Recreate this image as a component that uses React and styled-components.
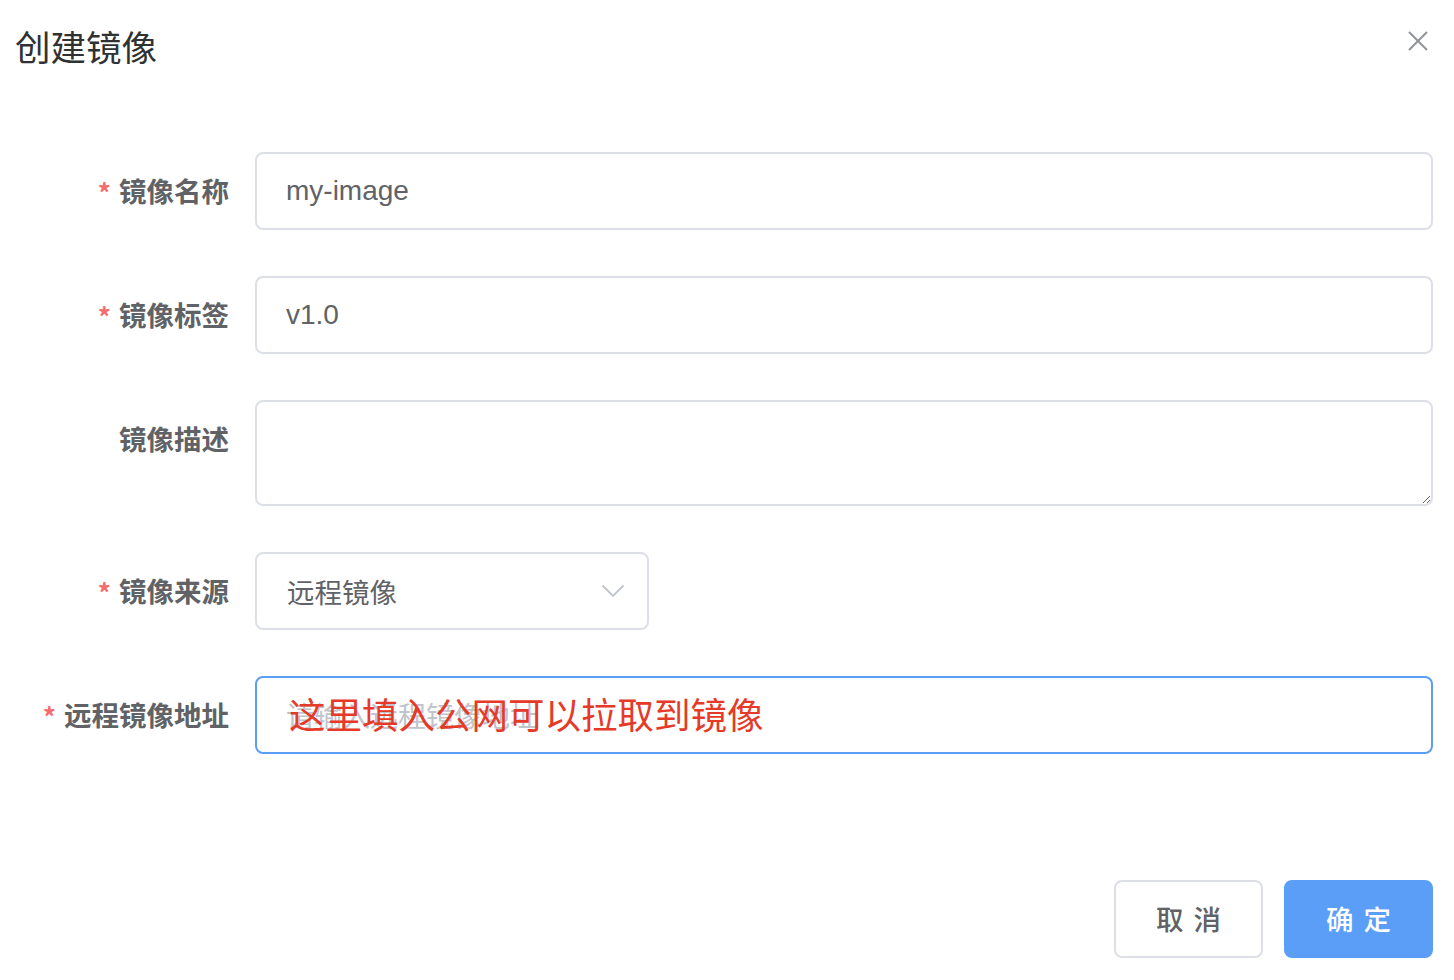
import React from 'react';
import styled, { createGlobalStyle } from 'styled-components';

const GlobalStyle = createGlobalStyle`
  html, body {
    margin: 0;
    padding: 0;
    background: #ffffff;
  }
  body {
    font-family: "Helvetica Neue", "Liberation Sans", "Noto Sans CJK SC", sans-serif;
  }
  * {
    box-sizing: border-box;
  }
`;

const cjk = `"Noto Sans CJK SC", "Liberation Sans", sans-serif`;
const latin = `"Helvetica Neue", "Liberation Sans", "Noto Sans CJK SC", sans-serif`;

const Dialog = styled.div`
  width: 1454px;
  height: 980px;
  padding: 20px 21px 0 15px;
  display: flex;
  flex-direction: column;
`;

const Header = styled.div`
  display: flex;
  align-items: center;
  justify-content: space-between;
  height: 56px;
`;

const Title = styled.h2`
  margin: 0;
  font-family: ${cjk};
  font-size: 35.5px;
  font-weight: 400;
  line-height: 56px;
  color: #303133;
  position: relative;
  top: -2px;
`;

const CloseButton = styled.button`
  border: none;
  background: none;
  padding: 0;
  width: 22px;
  height: 22px;
  margin: -14px 4px 0 0;
  display: flex;
  align-items: center;
  justify-content: center;
  cursor: pointer;
`;

const Form = styled.form`
  margin-top: 76px;
  display: flex;
  flex-direction: column;
  gap: 46px;
`;

const Row = styled.div`
  display: flex;
  align-items: flex-start;
`;

const Label = styled.label`
  width: 240px;
  height: 78px;
  flex-shrink: 0;
  padding-right: 26px;
  text-align: right;
  font-family: ${cjk};
  font-size: 27.5px;
  font-weight: 700;
  line-height: 76px;
  color: #606266;
  white-space: nowrap;
`;

const Star = styled.span`
  color: #f56c6c;
  margin-right: 8px;
  font-size: 26px;
  font-weight: 700;
  vertical-align: top;
  position: relative;
  top: 2px;
`;

const Field = styled.div`
  position: relative;
  flex: ${(p) => (p.$width ? '0 0 auto' : '1')};
  width: ${(p) => p.$width || 'auto'};
`;

const TextInput = styled.input`
  display: block;
  width: 100%;
  height: 78px;
  border: 2px solid ${(p) => (p.$focused ? '#5a9ef6' : '#dcdfe6')};
  border-radius: 8px;
  padding: 0 29px;
  font-family: ${(p) => (p.$cjk ? cjk : latin)};
  font-size: 28px;
  color: #606266;
  outline: none;
  background: #fff;

  &::placeholder {
    color: #c0c4cc;
    font-family: ${cjk};
  }
`;

const TextArea = styled.textarea`
  display: block;
  width: 100%;
  height: 106px;
  border: 2px solid #dcdfe6;
  border-radius: 8px;
  padding: 10px 29px;
  font-family: ${latin};
  font-size: 28px;
  color: #606266;
  outline: none;
  resize: vertical;
`;

const SelectBox = styled.div`
  height: 78px;
  border: 2px solid #dcdfe6;
  border-radius: 8px;
  padding: 0 22px 0 30px;
  display: flex;
  align-items: center;
  justify-content: space-between;
  font-family: ${cjk};
  font-size: 27.5px;
  color: #606266;
  background: #fff;
`;

const Note = styled.span`
  position: absolute;
  left: 34px;
  top: 50%;
  transform: translateY(-52%);
  font-family: ${cjk};
  font-size: 36.5px;
  color: #e63a29;
  white-space: nowrap;
  pointer-events: none;
`;

const Footer = styled.div`
  margin-top: 126px;
  display: flex;
  justify-content: flex-end;
  gap: 21px;
`;

const Button = styled.button`
  width: 149px;
  height: 78px;
  border-radius: 8px;
  border: 2px solid ${(p) => (p.$primary ? '#5a9ef8' : '#dcdfe6')};
  background: ${(p) => (p.$primary ? '#5a9ef8' : '#fff')};
  color: ${(p) => (p.$primary ? '#fff' : '#606266')};
  font-family: ${cjk};
  font-size: 27.5px;
  font-weight: 500;
  letter-spacing: 2px;
  padding: 0 0 2px 2px;
  cursor: pointer;
`;

const CloseIcon = () => (
  <svg width="20" height="20" viewBox="0 0 20 20">
    <path d="M1 1L19 19M19 1L1 19" stroke="#909399" strokeWidth="2" fill="none" />
  </svg>
);

const ChevronDown = () => (
  <svg width="24" height="14" viewBox="0 0 24 14">
    <path d="M1.5 1.5L12 12L22.5 1.5" stroke="#c0c4cc" strokeWidth="1.8" fill="none" />
  </svg>
);

const App = () => {
  return (
    <>
      <GlobalStyle />
      <Dialog>
        <Header>
          <Title>创建镜像</Title>
          <CloseButton type="button" aria-label="关闭">
            <CloseIcon />
          </CloseButton>
        </Header>

        <Form>
          {/* 镜像名称 */}
          <Row>
            <Label><Star>*</Star>镜像名称</Label>
            <Field>
              <TextInput defaultValue="my-image" />
            </Field>
          </Row>

          {/* 镜像标签 */}
          <Row>
            <Label><Star>*</Star>镜像标签</Label>
            <Field>
              <TextInput defaultValue="v1.0" />
            </Field>
          </Row>

          {/* 镜像描述 */}
          <Row>
            <Label>镜像描述</Label>
            <Field>
              <TextArea />
            </Field>
          </Row>

          {/* 镜像来源 */}
          <Row>
            <Label><Star>*</Star>镜像来源</Label>
            <Field $width="394px">
              <SelectBox>
                远程镜像
                <ChevronDown />
              </SelectBox>
            </Field>
          </Row>

          {/* 远程镜像地址 */}
          <Row>
            <Label><Star>*</Star>远程镜像地址</Label>
            <Field>
              <TextInput $focused $cjk placeholder="请输入远程镜像地址" />
              <Note>这里填入公网可以拉取到镜像</Note>
            </Field>
          </Row>
        </Form>

        <Footer>
          <Button type="button">取 消</Button>
          <Button type="button" $primary>确 定</Button>
        </Footer>
      </Dialog>
    </>
  );
};

export default App;
